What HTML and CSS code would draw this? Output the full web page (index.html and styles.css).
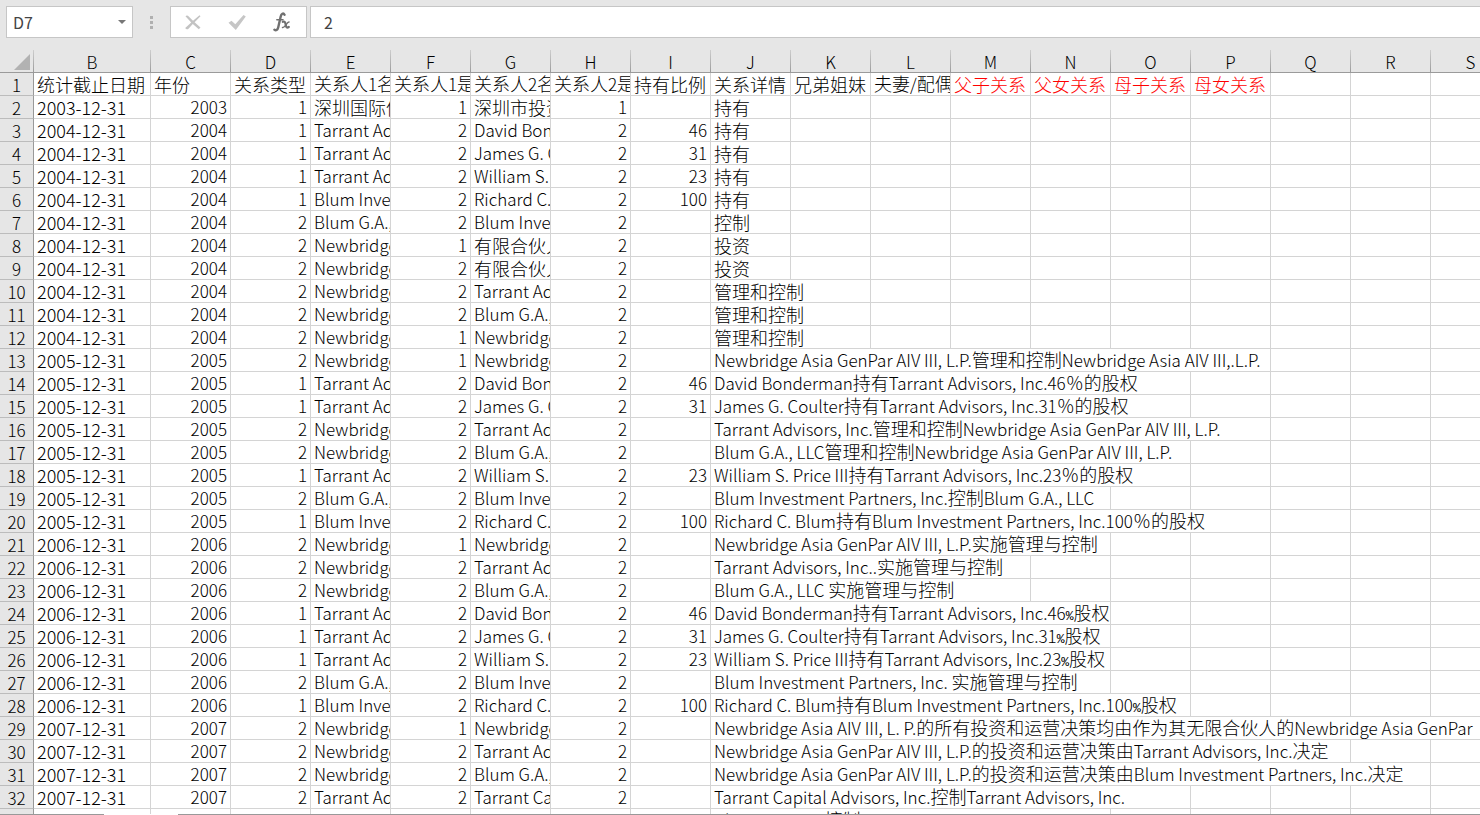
FILE: index.html
```
<!DOCTYPE html>
<html lang="zh-CN">
<head>
<meta charset="utf-8">
<title>Sheet</title>
<link rel="stylesheet" href="styles.css">
</head>
<body>
<div class="app">
  <header class="formula-bar">
    <div class="name-box">
      <input class="name-input" type="text" value="D7" aria-label="Name box">
      <button class="name-toggle" type="button" aria-label="Open name list">
        <svg width="8" height="4" viewBox="0 0 8 4"><path d="M0 0h8L4 4z" fill="#777"/></svg>
      </button>
    </div>
    <div class="grip"><i></i><i></i><i></i></div>
    <div class="actions">
      <button type="button" aria-label="Cancel">
        <svg width="18" height="18" viewBox="0 0 18 18"><path d="M1.500 3.200Q3.200 1.800 5 3.800L9 7.800L15.500 2.300L16.500 3.300L10.600 9.300L16.500 14.500L14.800 16.200L8.800 11L4.500 15.700Q2.500 17.200 1.200 15L7.200 9.400z" fill="#c3c3c3"/></svg>
      </button>
      <button type="button" aria-label="Enter">
        <svg width="18" height="18" viewBox="0 0 18 18"><path d="M.500 9.800L3.500 7.800L7.300 11.200L15.500 2L17.800 3.600L7.800 17z" fill="#c6c6c6"/></svg>
      </button>
      <button type="button" aria-label="Insert function">
        <svg width="18" height="20" viewBox="0 0 18 20" fill="none" stroke="#707070" stroke-linecap="round"><path d="M11.500 2.800C10.300.500 8.300 1.800 7.700 4.500L5.200 15.500C4.600 18 2.900 19 1.400 17.700" stroke-width="2.400"/><path d="M3.800 7.800H10" stroke-width="1.500"/><path d="M9.800 9.800C12 9 12.300 11 12.800 13C13.200 15.500 14 16.300 15.800 15" stroke-width="2.200"/><path d="M16 9.900C13.800 9.700 12 16.500 9.500 15.500" stroke-width="1.500"/></svg>
      </button>
    </div>
    <input class="formula-input" type="text" value="2" aria-label="Formula">
  </header>
  <main class="sheet">
    <table class="grid">
      <colgroup><col class="col-index"><col class="col-date"><col span="17" class="col-data"></colgroup>
      <thead><tr id="letters"><th class="corner"><svg width="16" height="16" viewBox="0 0 16 16"><path d="M16 0V16H0z" fill="#b2b2b2"/></svg></th></tr></thead>
      <tbody id="rows"></tbody>
    </table>
  </main>
  <footer class="tab-strip"><div class="active-tab"></div></footer>
</div>
<script src="sheet.js"></script>
</body>
</html>
```

FILE: styles.css
```
* { box-sizing: border-box; }

body {
  margin: 0;
  background: #e6e6e6;
  color: #000;
  font-family: "Noto Sans CJK SC", sans-serif;
}

.app {
  display: flex;
  flex-direction: column;
  height: 100vh;
  overflow: hidden;
}

.formula-bar {
  display: flex;
  flex: none;
  height: 50px;
  padding: 6px 0 12px 6px;
  background: #e6e6e6;
}

.name-box,
.actions {
  display: flex;
  align-items: center;
  border: 1px solid #c6c6c6;
  background: #fff;
}

.name-box { width: 127px; }

.name-input,
.formula-input {
  min-width: 0;
  border: 0;
  outline: 0;
  background: #fff;
  color: #444;
  font: 16px "Noto Sans CJK SC", sans-serif;
}

.name-input {
  flex: 1;
  padding: 0 0 0 6px;
}

.name-toggle,
.actions button {
  display: flex;
  align-items: center;
  justify-content: center;
  padding: 0;
  border: 0;
  background: none;
}

.name-toggle { width: 20px; height: 30px; }

.grip {
  display: flex;
  flex-direction: column;
  align-items: center;
  justify-content: center;
  gap: 2px;
  width: 37px;
}

.grip i {
  width: 3px;
  height: 3px;
  background: #b0b0b0;
}

.actions {
  width: 137px;
  margin-right: 3px;
  padding-right: 2px;
}

.actions button { flex: 1; height: 30px; }

.formula-input {
  flex: 1;
  padding: 0 13px;
  border: 1px solid #c6c6c6;
  border-right: 0;
}

.sheet {
  flex: 1;
  min-height: 0;
  overflow: hidden;
  background: #fff;
}

.grid {
  width: 1511px;
  border-collapse: separate;
  border-spacing: 0;
  table-layout: fixed;
  font-size: 18px;
  line-height: 18px;
}

.col-index { width: 34px; }
.col-date { width: 117px; }
.col-data { width: 80px; }

.grid th,
.grid td {
  height: 23px;
  padding: 0 3px;
  overflow: hidden;
  white-space: nowrap;
  text-align: left;
  font-weight: 300;
}

.grid td {
  padding-bottom: 1px;
  border-right: 1px solid #d4d4d4;
  border-bottom: 1px solid #d4d4d4;
}

.grid .number { text-align: right; }
.grid .red { color: #f00; }

.grid th {
  padding: 0;
  background: #e6e6e6;
  text-align: center;
}

.grid thead th {
  border-right: 1px solid;
  border-bottom: 1px solid #999;
  border-image: linear-gradient(#d0d0d0, #999) 1;
}

.grid tbody th {
  border-right: 1px solid #999;
  border-bottom: 1px solid #bcbcbc;
}

.grid .corner {
  padding: 4px 3px 0 0;
  line-height: 0;
  text-align: right;
  vertical-align: top;
}

.latin { font-size: 17px; }

.date .latin { font-size: 18px; }

.percent {
  font-family: "Liberation Mono", monospace;
  font-size: 13px;
  line-height: 1;
}

.tab-strip {
  flex: none;
  height: 1px;
  padding-left: 104px;
  background: #999;
}

.active-tab {
  width: 74px;
  height: 1px;
  background: #fff;
}
```

FILE: sheet.js
```
const DATA_COLUMNS = 18;
const headings = ["统计截止日期", "年份", "关系类型", "关系人1名称", "关系人1是否", "关系人2名称", "关系人2是否", "持有比例", "关系详情", "兄弟姐妹", "夫妻/配偶", "父子关系", "父女关系", "母子关系", "母女关系"];

// year, relation type, party 1, flag, party 2, flag, share, detail, columns the detail covers
const records = [
  [2003, 1, "深圳国际信托", 1, "深圳市投资", 1, "", "持有", 1],
  [2004, 1, "Tarrant Advisors", 2, "David Bonderman", 2, 46, "持有", 1],
  [2004, 1, "Tarrant Advisors", 2, "James G. Coulter", 2, 31, "持有", 1],
  [2004, 1, "Tarrant Advisors", 2, "William S. Price", 2, 23, "持有", 1],
  [2004, 1, "Blum Investment", 2, "Richard C. Blum", 2, 100, "持有", 1],
  [2004, 2, "Blum G.A., LLC", 2, "Blum Investment", 2, "", "控制", 1],
  [2004, 2, "Newbridge Asia", 1, "有限合伙人", 2, "", "投资", 1],
  [2004, 2, "Newbridge Asia", 2, "有限合伙人", 2, "", "投资", 1],
  [2004, 2, "Newbridge Asia", 2, "Tarrant Advisors", 2, "", "管理和控制", 2],
  [2004, 2, "Newbridge Asia", 2, "Blum G.A., LLC", 2, "", "管理和控制", 2],
  [2004, 2, "Newbridge Asia", 1, "Newbridge Asia", 2, "", "管理和控制", 2],
  [2005, 2, "Newbridge Asia", 1, "Newbridge Asia", 2, "", "Newbridge Asia GenPar AIV III, L.P.管理和控制Newbridge Asia AIV III,.L.P.", 7],
  [2005, 1, "Tarrant Advisors", 2, "David Bonderman", 2, 46, "David Bonderman持有Tarrant Advisors, Inc.46％的股权", 6],
  [2005, 1, "Tarrant Advisors", 2, "James G. Coulter", 2, 31, "James G. Coulter持有Tarrant Advisors, Inc.31％的股权", 6],
  [2005, 2, "Newbridge Asia", 2, "Tarrant Advisors", 2, "", "Tarrant Advisors, Inc.管理和控制Newbridge Asia GenPar AIV III, L.P.", 7],
  [2005, 2, "Newbridge Asia", 2, "Blum G.A., LLC", 2, "", "Blum G.A., LLC管理和控制Newbridge Asia GenPar AIV III, L.P.", 6],
  [2005, 1, "Tarrant Advisors", 2, "William S. Price", 2, 23, "William S. Price III持有Tarrant Advisors, Inc.23％的股权", 6],
  [2005, 2, "Blum G.A., LLC", 2, "Blum Investment", 2, "", "Blum Investment Partners, Inc.控制Blum G.A., LLC", 5],
  [2005, 1, "Blum Investment", 2, "Richard C. Blum", 2, 100, "Richard C. Blum持有Blum Investment Partners, Inc.100％的股权", 7],
  [2006, 2, "Newbridge Asia", 1, "Newbridge Asia", 2, "", "Newbridge Asia GenPar AIV III, L.P.实施管理与控制", 5],
  [2006, 2, "Newbridge Asia", 2, "Tarrant Advisors", 2, "", "Tarrant Advisors, Inc..实施管理与控制", 4],
  [2006, 2, "Newbridge Asia", 2, "Blum G.A., LLC", 2, "", "Blum G.A., LLC 实施管理与控制", 4],
  [2006, 1, "Tarrant Advisors", 2, "David Bonderman", 2, 46, "David Bonderman持有Tarrant Advisors, Inc.46%股权", 5],
  [2006, 1, "Tarrant Advisors", 2, "James G. Coulter", 2, 31, "James G. Coulter持有Tarrant Advisors, Inc.31%股权", 5],
  [2006, 1, "Tarrant Advisors", 2, "William S. Price", 2, 23, "William S. Price III持有Tarrant Advisors, Inc.23%股权", 5],
  [2006, 2, "Blum G.A., LLC", 2, "Blum Investment", 2, "", "Blum Investment Partners, Inc. 实施管理与控制", 5],
  [2006, 1, "Blum Investment", 2, "Richard C. Blum", 2, 100, "Richard C. Blum持有Blum Investment Partners, Inc.100%股权", 6],
  [2007, 2, "Newbridge Asia", 1, "Newbridge Asia", 2, "", "Newbridge Asia AIV III, L. P.的所有投资和运营决策均由作为其无限合伙人的Newbridge Asia GenPar", 10],
  [2007, 2, "Newbridge Asia", 2, "Tarrant Advisors", 2, "", "Newbridge Asia GenPar AIV III, L.P.的投资和运营决策由Tarrant Advisors, Inc.决定", 8],
  [2007, 2, "Newbridge Asia", 2, "Blum G.A., LLC", 2, "", "Newbridge Asia GenPar AIV III, L.P.的投资和运营决策由Blum Investment Partners, Inc.决定", 9],
  [2007, 2, "Tarrant Advisors", 2, "Tarrant Capital", 2, "", "Tarrant Capital Advisors, Inc.控制Tarrant Advisors, Inc.", 6],
  ["", "", "", "", "", "", "", "Blum G.A., LLC控制", 5]
];

// Latin runs are set slightly smaller than the Chinese text around them.
function fill(cell, value) {
  for (const run of String(value).match(/%|[\x20-\x24\x26-\x7e]+|[^\x20-\x7e]+/g) || []) {
    if (/^[\x20-\x7e]/.test(run)) {
      const span = document.createElement("span");
      span.className = run === "%" ? "percent" : "latin";
      span.textContent = run;
      cell.append(span);
    } else {
      cell.append(run);
    }
  }
}

const letters = document.getElementById("letters");
for (const letter of "BCDEFGHIJKLMNOPQRS") {
  const th = document.createElement("th");
  th.scope = "col";
  fill(th, letter);
  letters.append(th);
}

const body = document.getElementById("rows");
function addRow(number, values, lastSpan) {
  const row = body.insertRow();
  const th = document.createElement("th");
  th.scope = "row";
  fill(th, number);
  row.append(th);
  let used = 0;
  values.forEach((value, i) => {
    const cell = row.insertCell();
    if (i === values.length - 1) cell.colSpan = lastSpan;
    if (i === 0) cell.className = "date";
    if (typeof value === "number") cell.className = "number";
    if (number === 1 && i > 10) cell.className = "red";
    fill(cell, value);
    used += cell.colSpan;
  });
  while (used++ < DATA_COLUMNS) row.insertCell();
}

addRow(1, headings, 1);
records.forEach((record, i) => {
  const year = record[0];
  addRow(i + 2, [year ? year + "-12-31" : "", ...record.slice(0, 8)], record[8]);
});
```
